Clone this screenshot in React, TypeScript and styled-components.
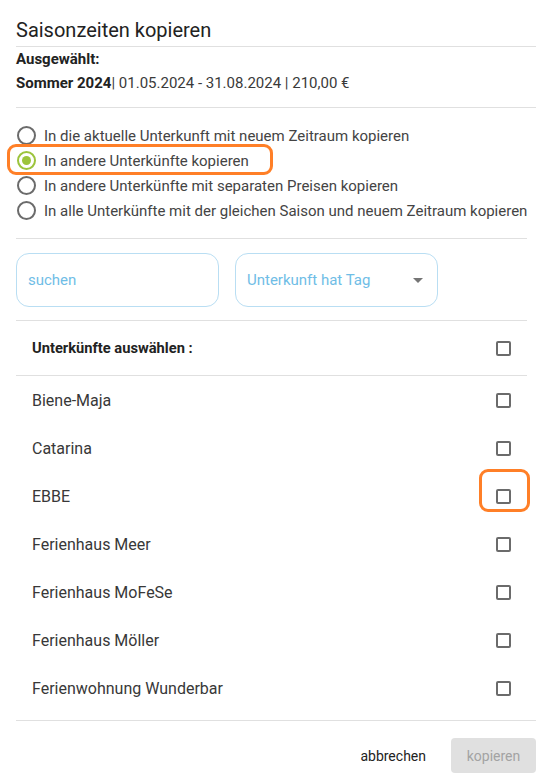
import styled, { createGlobalStyle } from 'styled-components';

const GlobalStyle = createGlobalStyle`
  body {
    margin: 0;
    background: #ffffff;
    font-family: Roboto, "Liberation Sans", Arial, sans-serif;
    color: #333333;
  }
`;

const Dialog = styled.div`
  width: 520px;
  padding: 18px 13px 10px 16px;
`;

const Title = styled.h2`
  margin: 0 0 4px;
  font-size: 20px;
  font-weight: 400;
  line-height: 24px;
  color: #222222;
`;

const Divider = styled.hr`
  margin: 0;
  border: none;
  border-top: 1px solid #e0e0e0;
`;

const Body = styled.div`
  padding-right: 9px;
`;

const Selected = styled.div`
  padding: 2px 0 14px;
  display: flex;
  flex-direction: column;
  gap: 4px;
  font-size: 15px;
  line-height: 20px;
  color: #3a3a3a;
  b {
    font-weight: 700;
    color: #222222;
  }
`;

const RadioGroup = styled.div`
  padding: 15px 0;
  display: flex;
  flex-direction: column;
`;

const RadioRow = styled.label`
  position: relative;
  display: flex;
  align-items: center;
  gap: 8px;
  height: 25px;
  font-size: 15px;
  color: #444444;
`;

const RadioDot = styled.span<{ checked?: boolean }>`
  box-sizing: border-box;
  width: 19px;
  height: 19px;
  margin-left: 1px;
  border-radius: 50%;
  border: 2px solid ${(p) => (p.checked ? '#9cc43c' : '#6b6b6b')};
  display: flex;
  align-items: center;
  justify-content: center;
  &::after {
    content: '';
    display: ${(p) => (p.checked ? 'block' : 'none')};
    width: 9px;
    height: 9px;
    border-radius: 50%;
    background: #9cc43c;
  }
`;

const Highlight = styled.span<{ top: number; left: number; w: number; h: number }>`
  position: absolute;
  top: ${(p) => p.top}px;
  left: ${(p) => p.left}px;
  width: ${(p) => p.w}px;
  height: ${(p) => p.h}px;
  box-sizing: border-box;
  border: 3px solid #ff7f27;
  border-radius: 9px;
  pointer-events: none;
`;

const Filters = styled.div`
  padding: 14px 0 13px;
  display: flex;
  gap: 16px;
`;

const Field = styled.div`
  box-sizing: border-box;
  width: 203px;
  height: 54px;
  border: 1px solid #b9def3;
  border-radius: 13px;
  padding: 0 14px 0 11px;
  display: flex;
  align-items: center;
  justify-content: space-between;
  font-size: 15px;
  color: #6fbde6;
`;

const Caret = styled.span`
  width: 0;
  height: 0;
  border-left: 5px solid transparent;
  border-right: 5px solid transparent;
  border-top: 5px solid #757575;
`;

const Row = styled.div<{ header?: boolean }>`
  height: ${(p) => (p.header ? 54 : 48)}px;
  padding: 0 16px;
  display: flex;
  align-items: center;
  justify-content: space-between;
  font-size: ${(p) => (p.header ? 14.7 : 16)}px;
  font-weight: ${(p) => (p.header ? 700 : 400)};
  color: ${(p) => (p.header ? '#222222' : '#383838')};
`;

const List = styled.div`
  padding-bottom: 8px;
`;

const Box = styled.span`
  position: relative;
  box-sizing: border-box;
  width: 15px;
  height: 15px;
  border: 2px solid #6b6b6b;
  border-radius: 2px;
`;

const Actions = styled.div`
  padding-top: 17px;
  display: flex;
  justify-content: flex-end;
  align-items: center;
  gap: 17px;
`;

const TextButton = styled.button`
  border: none;
  background: none;
  padding: 0 8px;
  font-family: inherit;
  font-size: 14px;
  color: #222222;
`;

const DisabledButton = styled.button`
  width: 85px;
  height: 35px;
  border: none;
  border-radius: 4px;
  background: #e0e0e0;
  font-family: inherit;
  font-size: 14px;
  color: #a3a3a3;
`;

const options = [
  'In die aktuelle Unterkunft mit neuem Zeitraum kopieren',
  'In andere Unterkünfte kopieren',
  'In andere Unterkünfte mit separaten Preisen kopieren',
  'In alle Unterkünfte mit der gleichen Saison und neuem Zeitraum kopieren',
];

const accommodations = [
  'Biene-Maja',
  'Catarina',
  'EBBE',
  'Ferienhaus Meer',
  'Ferienhaus MoFeSe',
  'Ferienhaus Möller',
  'Ferienwohnung Wunderbar',
];

export default function App() {
  return (
    <>
      <GlobalStyle />
      <Dialog>
        <Title>Saisonzeiten kopieren</Title>
        <Divider />
        <Selected>
          <b>Ausgewählt:</b>
          <span>
            <b>Sommer 2024</b>| 01.05.2024 - 31.08.2024 | 210,00 €
          </span>
        </Selected>
        <Divider />
        <RadioGroup>
          {options.map((o, i) => (
            <RadioRow key={o}>
              <RadioDot checked={i === 1} />
              {o}
              {i === 1 && <Highlight top={-4} left={-9} w={266} h={31} />}
            </RadioRow>
          ))}
        </RadioGroup>
        <Body>
          <Divider />
          <Filters>
            <Field>suchen</Field>
            <Field>
              Unterkunft hat Tag
              <Caret />
            </Field>
          </Filters>
          <Divider />
          <Row header>
            Unterkünfte auswählen :
            <Box />
          </Row>
          <Divider />
          <List>
            {accommodations.map((a) => (
              <Row key={a}>
                {a}
                <Box>
                  {a === 'EBBE' && <Highlight top={-22} left={-19} w={51} h={43} />}
                </Box>
              </Row>
            ))}
          </List>
        </Body>
        <Divider />
        <Actions>
          <TextButton>abbrechen</TextButton>
          <DisabledButton>kopieren</DisabledButton>
        </Actions>
      </Dialog>
    </>
  );
}
